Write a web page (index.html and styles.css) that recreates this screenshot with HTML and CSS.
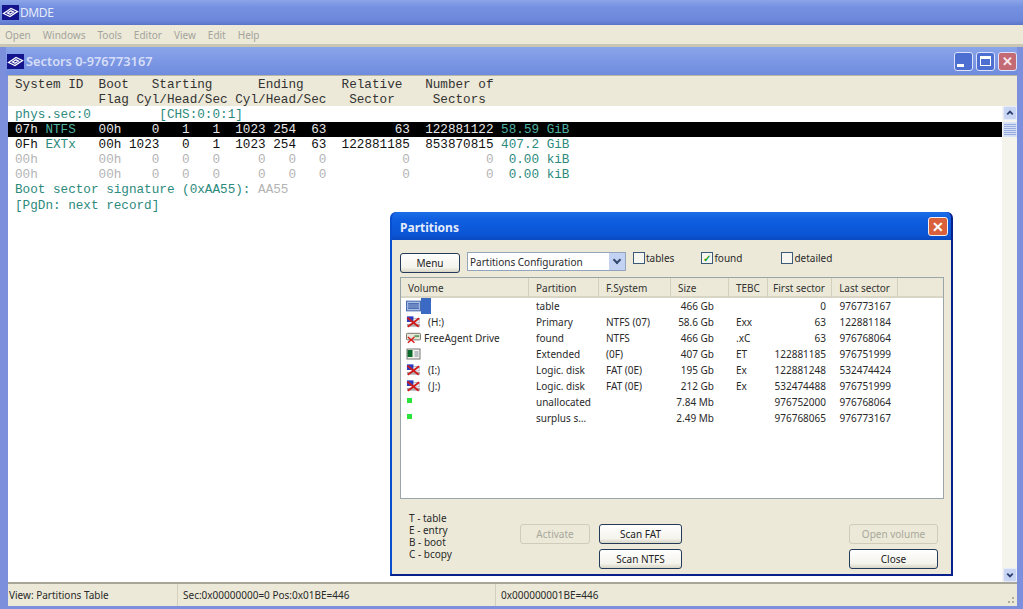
FILE: index.html
```html
<!DOCTYPE html>
<html lang="en">
  <head>
    <meta charset="UTF-8" />
    <title>DMDE</title>
    <link rel="stylesheet" href="styles.css">
  </head>
  <body>
    <svg class="defs" width="0" height="0">
      <symbol id="logo" viewBox="0 0 17 15">
        <rect width="17" height="15" fill="#14148c"/>
        <path d="M1.500 8.500 9 3.500l6.500 3-7.500 5zM5.500 8 9 5.800l2.500 1.200L8 9.300z" fill="none" stroke="#fff" stroke-width="1.300"/>
      </symbol>
      <symbol id="drive" viewBox="0 0 16 12">
        <rect x="1" y="0" width="7" height="6" fill="#2a3cc0"/>
        <rect x="8" y="2" width="6" height="5" fill="#f4f4f4" stroke="#8888a0" stroke-width=".6"/>
        <path d="M1 8h14v3H1z" fill="#b0a8b0"/>
        <path d="M1.500 1.500l12 9.500M14 2 2 11" stroke="#d01c1c" stroke-width="2"/>
      </symbol>
      <symbol id="hdd" viewBox="0 0 16 12">
        <rect x=".5" y="1" width="15" height="7" rx="1" fill="#e6e6da" stroke="#707068"/>
        <rect x="9" y="3" width="5" height="2" fill="#60a060"/>
        <path d="M2 5l7 6M9 5l-7 6" stroke="#d81818" stroke-width="1.500"/>
      </symbol>
      <symbol id="ext" viewBox="0 0 14 12">
        <rect x=".5" y="1" width="13" height="10" fill="#f2f2ea" stroke="#777"/>
        <rect x="1" y="2" width="5" height="7" fill="#0c6a2c"/>
        <path d="M8 4h4M8 6h4M8 8h4" stroke="#8090a0"/>
      </symbol>
      <symbol id="tbl" viewBox="0 0 14 10">
        <rect x=".5" y=".5" width="13" height="9" fill="#a8c0e8" stroke="#4a6cb0"/>
        <path d="M2 3h10M2 5h10M2 7h10" stroke="#3050a0"/>
      </symbol>
      <symbol id="chevUp" viewBox="0 0 13 13">
        <path d="M3.500 8 6.500 5l3 3" fill="none" stroke="#2c3e70" stroke-width="2"/>
      </symbol>
      <symbol id="chevDown" viewBox="0 0 13 13">
        <path d="M3.500 5l3 3 3-3" fill="none" stroke="#2c3e70" stroke-width="2"/>
      </symbol>
    </svg>

    <header class="appTitle">
      <svg class="logo"><use href="#logo"/></svg>
      <span>DMDE</span>
    </header>
    <nav class="menuBar">
      <span>Open</span><span>Windows</span><span>Tools</span><span>Editor</span><span>View</span><span>Edit</span><span>Help</span>
    </nav>

    <main class="client">
      <section class="sectorWin">
        <div class="winTitle">
          <svg class="logo small"><use href="#logo"/></svg>
          <span class="winName">Sectors 0-976773167</span>
          <div class="winBtns">
            <span class="winBtn"><i class="glyphMin"></i></span>
            <span class="winBtn"><i class="glyphMax"></i></span>
            <span class="winBtn close">&#x2715;</span>
          </div>
        </div>

        <pre class="headRow">System ID  Boot   Starting      Ending     Relative   Number of
           Flag Cyl/Head/Sec Cyl/Head/Sec   Sector     Sectors</pre>

        <div class="editor">
          <div class="dump">
<pre class="line teal">phys.sec:0         [CHS:0:0:1]</pre>
<pre class="line sel"><b>07h</b> NTFS   <b>00h    0   1   1  1023 254  63         63  122881122</b> 58.59 GiB</pre>
<pre class="line teal"><b>0Fh</b> EXTx   <b>00h 1023   0   1  1023 254  63  122881185  853870815</b> 407.2 GiB</pre>
<pre class="line teal"><s>00h        00h    0   0   0     0   0   0          0          0</s>  0.00 kiB</pre>
<pre class="line teal"><s>00h        00h    0   0   0     0   0   0          0          0</s>  0.00 kiB</pre>
<pre class="line teal">Boot sector signature (0xAA55): <s>AA55</s></pre>
<pre class="line teal">[PgDn: next record]</pre>
          </div>
          <div class="scrollBar">
            <span class="arrow"><svg><use href="#chevUp"/></svg></span>
            <span class="thumb"></span>
            <span class="track"></span>
            <span class="arrow"><svg><use href="#chevDown"/></svg></span>
          </div>
        </div>

        <footer class="statusBar">
          <span class="cellView">View: Partitions Table</span>
          <span class="cellSec">Sec:0x00000000=0 Pos:0x01BE=446</span>
          <span class="cellPos">0x000000001BE=446</span>
        </footer>
      </section>

      <section class="dialog">
        <div class="dlgTitle">
          <span class="dlgName">Partitions</span>
          <span class="dlgClose">&#x2715;</span>
        </div>
        <div class="dlgBody">
          <div class="toolRow">
            <button class="btn menuBtn">Menu</button>
            <div class="combo">
              <span>Partitions Configuration</span>
              <span class="comboBtn"></span>
            </div>
            <label class="chk tablesChk"><i></i>tables</label>
            <label class="chk foundChk"><i class="on">&#x2713;</i>found</label>
            <label class="chk detailChk"><i></i>detailed</label>
          </div>

          <div class="listView">
            <div class="row listHead">
              <span>Volume</span><span>Partition</span><span>F.System</span><span>Size</span><span>TEBC</span><span class="num">First sector</span><span class="num last">Last sector</span>
            </div>
            <div class="row"><span class="vol"><svg class="ico"><use href="#tbl"/></svg><em class="volSel"></em></span><span>table</span><span></span><span class="num sz">466 Gb</span><span></span><span class="num">0</span><span class="num last">976773167</span></div>
            <div class="row"><span class="vol"><svg class="ico"><use href="#drive"/></svg><span class="letter">(H:)</span></span><span>Primary</span><span>NTFS (07)</span><span class="num sz">58.6 Gb</span><span>Exx</span><span class="num">63</span><span class="num last">122881184</span></div>
            <div class="row"><span class="vol"><svg class="ico"><use href="#hdd"/></svg>FreeAgent Drive</span><span>found</span><span>NTFS</span><span class="num sz">466 Gb</span><span>.xC</span><span class="num">63</span><span class="num last">976768064</span></div>
            <div class="row"><span class="vol"><svg class="ico"><use href="#ext"/></svg></span><span>Extended</span><span>(0F)</span><span class="num sz">407 Gb</span><span>ET</span><span class="num">122881185</span><span class="num last">976751999</span></div>
            <div class="row"><span class="vol"><svg class="ico"><use href="#drive"/></svg><span class="letter">(I:)</span></span><span>Logic. disk</span><span>FAT (0E)</span><span class="num sz">195 Gb</span><span>Ex</span><span class="num">122881248</span><span class="num last">532474424</span></div>
            <div class="row"><span class="vol"><svg class="ico"><use href="#drive"/></svg><span class="letter">(J:)</span></span><span>Logic. disk</span><span>FAT (0E)</span><span class="num sz">212 Gb</span><span>Ex</span><span class="num">532474488</span><span class="num last">976751999</span></div>
            <div class="row"><span class="vol"><i class="dot"></i></span><span>unallocated</span><span></span><span class="num sz">7.84 Mb</span><span></span><span class="num">976752000</span><span class="num last">976768064</span></div>
            <div class="row"><span class="vol"><i class="dot"></i></span><span>surplus s&#x2026;</span><span></span><span class="num sz">2.49 Mb</span><span></span><span class="num">976768065</span><span class="num last">976773167</span></div>
          </div>

          <div class="bottomRow">
            <div class="legend">
              <div>T - table</div>
              <div>E - entry</div>
              <div>B - boot</div>
              <div>C - bcopy</div>
            </div>
            <button class="btn activate" disabled>Activate</button>
            <div class="btnCol scans">
              <button class="btn">Scan FAT</button>
              <button class="btn">Scan NTFS</button>
            </div>
            <div class="btnCol ends">
              <button class="btn" disabled>Open volume</button>
              <button class="btn">Close</button>
            </div>
          </div>
        </div>
      </section>
    </main>
  </body>
</html>
```

FILE: styles.css
```css
:root {
  --face: #ece9d8;
  --teal: #2c8a7c;
  --frame: #7b8fdc;
  --ui: "Noto Sans", "Open Sans", sans-serif;
}

html,
body {
  margin: 0;
  padding: 0;
}

body {
  width: 1023px;
  height: 609px;
  overflow: hidden;
  display: flex;
  flex-direction: column;
  background: var(--frame);
  font-family: var(--ui);
  font-size: 10px;
  color: #2a2a2a;
}

.defs {
  position: absolute;
}

.logo {
  width: 17px;
  height: 15px;
  flex: none;
}

/* outer window */
.appTitle {
  height: 25px;
  display: flex;
  align-items: center;
  gap: 1px;
  padding-left: 2px;
  box-sizing: border-box;
  background: linear-gradient(#8aa5e8, #7590e0 30%, #6d88da 80%, #5c74c8);
  color: #e6ebfb;
  font-size: 12px;
  letter-spacing: -0.4px;
}

.menuBar {
  height: 19px;
  display: flex;
  align-items: center;
  gap: 12px;
  padding-left: 5px;
  background: var(--face);
  color: #a4a49c;
  border-bottom: 3px solid #c9c6b4;
}

.client {
  position: relative;
  flex: 1;
  display: flex;
  padding: 0 6px 3px 0;
  background: var(--frame);
}

.sectorWin {
  flex: 1;
  display: flex;
  flex-direction: column;
  border-left: 8px solid var(--frame);
}

.winTitle {
  height: 28px;
  margin-left: -2px;
  display: flex;
  align-items: center;
  gap: 2px;
  background: linear-gradient(#8ba5e9, #7f9ae6 40%, #6f8bdd);
  color: #d6def8;
  font-size: 12.800px;
  font-weight: 600;
}

.logo.small {
  margin-left: 1px;
}

.winName {
  flex: 1;
}

.winBtns {
  display: flex;
  gap: 3px;
}

.winBtn {
  width: 19px;
  height: 19px;
  border: 1px solid #dbe2fa;
  border-radius: 3px;
  box-sizing: border-box;
  background: #4d6fd2;
  display: flex;
  align-items: center;
  justify-content: center;
  color: #fbe8ea;
  font-size: 13px;
}

.winBtn.close {
  background: #c46a74;
}

.glyphMin {
  width: 7px;
  height: 3px;
  margin: 8px 7px 0 0;
  background: #fff;
}

.glyphMax {
  width: 11px;
  height: 10px;
  border: 1px solid #fff;
  border-top-width: 3px;
  box-sizing: border-box;
}

pre {
  margin: 0;
  font-family: "Liberation Mono", monospace;
  font-size: 12.660px;
}

.headRow {
  height: 31px;
  box-sizing: border-box;
  padding: 1px 0 0 7px;
  line-height: 15px;
  background: var(--face);
  color: #333;
  border-top: 1px solid #b8b6a4;
}

.editor {
  flex: 1;
  display: flex;
  background: #fff;
}

.dump {
  flex: 1;
  padding-top: 1px;
}

.line {
  height: 15.100px;
  line-height: 15.100px;
  padding-left: 7px;
  white-space: pre;
}

.teal {
  color: var(--teal);
}

.teal b,
.sel b {
  font-weight: normal;
  color: #111;
}

.teal s {
  text-decoration: none;
  color: #b4b4b4;
}

.sel {
  background: #000;
  color: #4fb3a3;
}

.sel b {
  color: #e8e8e8;
}

.scrollBar {
  width: 15px;
  display: flex;
  flex-direction: column;
  background: #f4f3ec;
}

.arrow {
  width: 14px;
  height: 14px;
  margin-left: 1px;
  background: #c8d6f4;
  border: 1px solid #e6ecfb;
  border-radius: 2px;
  box-sizing: border-box;
}

.arrow svg {
  display: block;
  width: 12px;
  height: 12px;
}

.thumb {
  height: 15px;
  margin: 2px 0 0 1px;
  background: repeating-linear-gradient(#d5e0f7 0 1px, #97acdc 1px 2px);
  border: 1px solid #d9e3f8;
  box-sizing: border-box;
}

.track {
  flex: 1;
}

.statusBar {
  height: 24px;
  box-sizing: border-box;
  display: flex;
  align-items: center;
  background: var(--face);
  border-top: 2px solid #a8a698;
  white-space: nowrap;
}

.statusBar span {
  height: 100%;
  display: flex;
  align-items: center;
  padding-left: 5px;
  box-sizing: border-box;
  border-right: 1px solid #d4d0bc;
}

.statusBar .cellView {
  width: 170px;
  padding-left: 1px;
}

.statusBar .cellSec {
  width: 318px;
}

.statusBar .cellPos {
  flex: 1;
  border-right: 0;
  background: radial-gradient(circle at 1px 1px, #b0ad9c 1px, transparent 1.500px) right 1px bottom 1px / 4px 4px no-repeat,
    radial-gradient(circle at 1px 1px, #b0ad9c 1px, transparent 1.500px) right 5px bottom 1px / 4px 4px no-repeat,
    radial-gradient(circle at 1px 1px, #b0ad9c 1px, transparent 1.500px) right 1px bottom 5px / 4px 4px no-repeat;
}

/* floating dialog */
.dialog {
  position: absolute;
  left: 390px;
  top: 165px;
  width: 563px;
  height: 364px;
  box-sizing: border-box;
  display: flex;
  flex-direction: column;
  background: #0a47c8;
  border-radius: 6px 6px 0 0;
  border: 2px solid #08208c;
  border-left-color: #0a4ed0;
  border-top: 0;
  border-bottom-width: 3px;
}

.dlgTitle {
  height: 28px;
  flex: none;
  display: flex;
  align-items: center;
  justify-content: space-between;
  padding: 0 3px 0 8px;
  border-radius: 6px 6px 0 0;
  background: linear-gradient(#1d6ee8, #0f5fe0 25%, #0a55d6 80%, #0a49c0);
  color: #e4ecfb;
  font-size: 12px;
  font-weight: 700;
}

.dlgName {
  padding-top: 2px;
}

.dlgClose {
  width: 20px;
  height: 19px;
  box-sizing: border-box;
  border: 1px solid #f0f0f0;
  border-radius: 3px;
  background: #d9603a;
  color: #fff;
  font-size: 14px;
  line-height: 17px;
  text-align: center;
  font-weight: 700;
}

.dlgBody {
  flex: 1;
  padding: 12px 7px 5px 8px;
  background: var(--face);
  display: flex;
  flex-direction: column;
}

.toolRow {
  height: 25px;
  flex: none;
  display: flex;
  align-items: flex-start;
}

.btn {
  height: 20px;
  padding: 0;
  box-sizing: border-box;
  font-family: var(--ui);
  font-size: 10px;
  color: #222;
  border: 1px solid #233a58;
  border-radius: 3px;
  background: linear-gradient(#fff, #f4f3ec 75%, #d8d5c6);
}

.btn:disabled {
  color: #a8a89c;
  border-color: #cfccbb;
  background: #ece9d8;
}

.menuBtn {
  width: 60px;
  margin-top: 1px;
}

.combo {
  width: 159px;
  height: 19px;
  margin-left: 7px;
  box-sizing: border-box;
  display: flex;
  align-items: center;
  justify-content: space-between;
  padding-left: 2px;
  background: #fff;
  border: 1px solid #93a5bd;
}

.comboBtn {
  width: 16px;
  height: 17px;
  background: #c3d2f2;
  position: relative;
}

.comboBtn::after {
  content: "";
  position: absolute;
  left: 5px;
  top: 4px;
  width: 4px;
  height: 4px;
  border: solid #33486e;
  border-width: 0 2px 2px 0;
  transform: rotate(45deg);
}

.chk {
  display: flex;
  align-items: center;
  height: 14px;
  margin-top: -1px;
  margin-left: 7px;
}

.foundChk {
  margin-left: 27px;
}

.detailChk {
  margin-left: 39px;
}

.chk i {
  width: 12px;
  height: 12px;
  box-sizing: border-box;
  margin-right: 1px;
  border: 1px solid #3c5a78;
  background: #f6f6f0;
  font-style: normal;
  font-weight: 900;
  font-size: 10px;
  line-height: 10px;
  text-align: center;
  color: #20a020;
}

.listView {
  height: 222px;
  flex: none;
  box-sizing: border-box;
  background: #fff;
  border: 1px solid #9aa5a8;
}

.row {
  display: grid;
  grid-template-columns: 128px 70px 72px 58px 39px 64px 66px;
  height: 16px;
  line-height: 16px;
  white-space: nowrap;
}

.row > span {
  padding-left: 7px;
  min-width: 0;
}

.row .num {
  text-align: right;
  padding: 0 6px 0 0;
}

.row .last {
  padding-right: 7px;
}

.row .sz {
  padding-right: 15px;
}

.listHead {
  height: 20px;
  line-height: 20px;
  background: var(--face);
  border-bottom: 2px solid #d8d5c4;
  box-sizing: border-box;
  grid-template-columns: 128px 70px 72px 58px 39px 64px 66px 1fr;
  color: #333;
}

.listHead > span {
  border-right: 1px solid #d4d0bc;
}

.row .vol {
  display: flex;
  align-items: center;
  padding-left: 5px;
  gap: 3px;
}

.ico {
  width: 15px;
  height: 12px;
  flex: none;
}

.volSel {
  width: 10px;
  height: 16px;
  margin-left: -3px;
  background: #3a6ac4;
}

.letter {
  margin-left: 4px;
}

.dot {
  width: 5px;
  height: 5px;
  margin: -3px 0 0 1px;
  background: #2ce23c;
}

.bottomRow {
  flex: 1;
  display: flex;
  align-items: flex-start;
  padding-top: 25px;
}

.legend {
  width: 111px;
  margin: -12px 0 0 9px;
  line-height: 12px;
}

.activate {
  width: 70px;
}

.btnCol {
  display: flex;
  flex-direction: column;
  gap: 5px;
}

.scans {
  width: 83px;
  margin-left: 9px;
}

.ends {
  width: 89px;
  margin-left: 167px;
}
```
